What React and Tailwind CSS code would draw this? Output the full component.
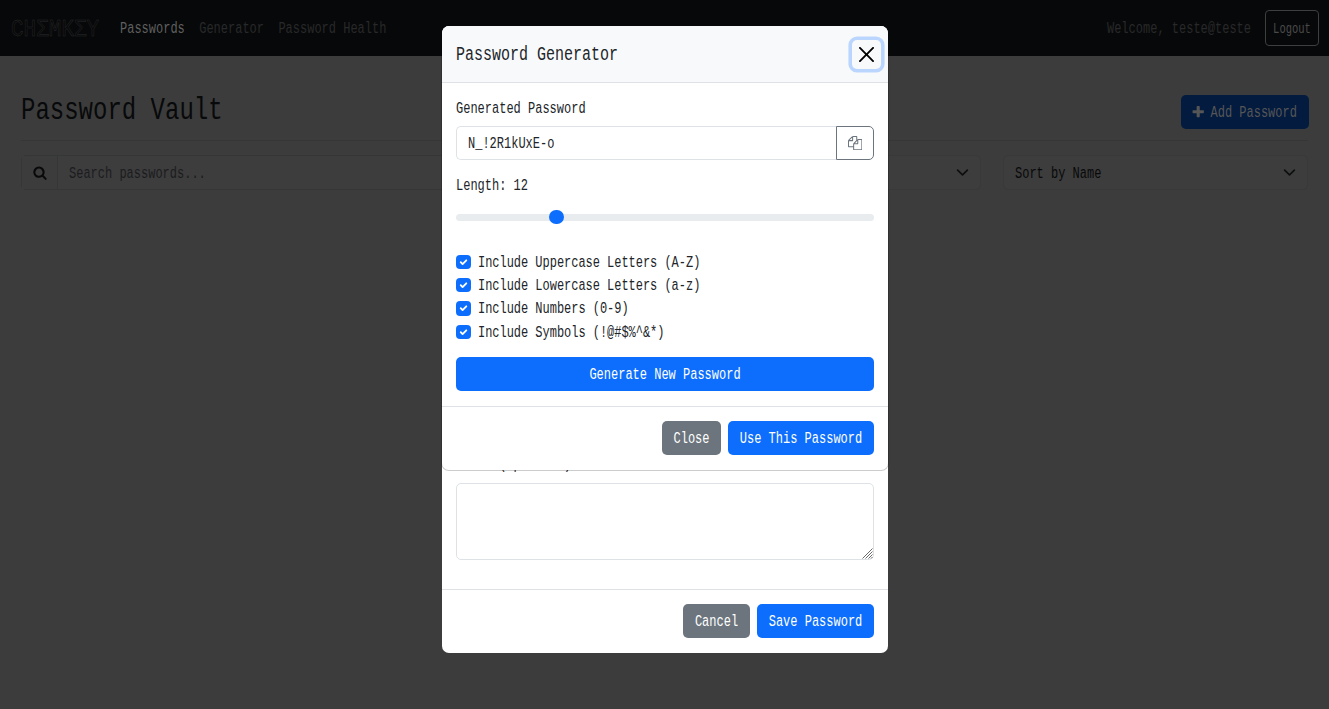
import React from "react";

// Condensed monospace text: tall glyphs without changing the line's width.
function T({ children, className = "" }) {
  return (
    <span className={`mt-[2px] inline-block scale-y-[1.34] whitespace-pre ${className}`}>
      {children}
    </span>
  );
}

function FaIcon({ d, className, viewBox = "0 0 1792 1792" }) {
  return (
    <svg viewBox={viewBox} className={className} fill="currentColor">
      <path d={d} />
    </svg>
  );
}

const SEARCH =
  "M1152 832q0-185-131.5-316.5T704 384 387.5 515.5 256 832t131.5 316.5T704 1280t316.5-131.5T1152 832zm512 832q0 52-38 90t-90 38q-54 0-90-38l-343-342q-179 124-399 124-143 0-273.5-55.5t-225-150-150-225T0 832t55.5-273.5 150-225 225-150T704 128t273.5 55.5 225 150 150 225T1408 832q0 220-124 399l343 343q37 37 37 90z";
const PLUS =
  "M1600 736v192q0 40-28 68t-68 28h-416v416q0 40-28 68t-68 28H800q-40 0-68-28t-28-68v-416H288q-40 0-68-28t-28-68V736q0-40 28-68t68-28h416V224q0-40 28-68t68-28h192q40 0 68 28t28 68v416h416q40 0 68 28t28 68z";
const COPY =
  "M1696 384q40 0 68 28t28 68v1216q0 40-28 68t-68 28h-960q-40 0-68-28t-28-68v-288h-544q-40 0-68-28t-28-68v-672q0-40 20-88t48-76l408-408q28-28 76-48t88-20h416q40 0 68 28t28 68v328q68-40 128-40h416zm-544 213l-299 299h299v-299zm-640-384l-299 299h299v-299zm196 647l316-316v-416h-384v416q0 40-28 68t-68 28h-416v640h512v-256q0-40 20-88t48-76zm956 804v-1152h-384v416q0 40-28 68t-68 28h-416v640h896z";
const CLOSE =
  "M.293.293a1 1 0 0 1 1.414 0L8 6.586 14.293.293a1 1 0 1 1 1.414 1.414L9.414 8l6.293 6.293a1 1 0 0 1-1.414 1.414L8 9.414l-6.293 6.293a1 1 0 0 1-1.414-1.414L6.586 8 .293 1.707a1 1 0 0 1 0-1.414";

function Select({ label }) {
  return (
    <div className="flex h-[35px] items-center justify-between rounded-[5px] border border-[#383939] bg-[#3d3d3d] pr-[11px] pl-[11px] text-[#08090a]">
      <T>{label}</T>
      <svg viewBox="0 0 16 16" className="h-[13px] w-[13px]" fill="none" stroke="#0d0e10" strokeWidth="2" strokeLinecap="round" strokeLinejoin="round">
        <path d="m2 5 6 6 6-6" />
      </svg>
    </div>
  );
}

function Button({ children, className }) {
  return (
    <button className={`flex h-[34px] items-center justify-center rounded-[5px] text-white ${className}`}>
      <T>{children}</T>
    </button>
  );
}

function Check({ label }) {
  return (
    <label className="flex h-[23.4px] items-center gap-[7px]">
      <span className="flex h-[14.4px] w-[15px] items-center justify-center rounded-[4px] bg-[#0d6efd]">
        <svg viewBox="0 0 20 20" className="h-[12.4px] w-[12.4px]" fill="none" stroke="#fff" strokeWidth="3" strokeLinecap="round" strokeLinejoin="round">
          <path d="m6 10 3 3 6-6" />
        </svg>
      </span>
      <T>{label}</T>
    </label>
  );
}

function Navbar() {
  return (
    <header className="flex h-14 items-center bg-[#070809] pr-[10px] pl-[11px]">
      <span className="w-[109px] pt-[2px] text-[21px] leading-none text-[#070809] [-webkit-text-stroke:0.4px_#2a2b2b]">
        <span className="inline-block scale-y-[1.12]">CHΣMKΣY</span>
      </span>
      <nav className="flex flex-1 gap-[14.4px] text-[#28292a]">
        <T className="text-[#5e5f5f]">Passwords</T>
        <T>Generator</T>
        <T>Password Health</T>
      </nav>
      <T className="mr-[14px] text-[#28292a]">Welcome, teste@teste</T>
      <button className="flex h-9 w-[54px] items-center justify-center rounded-[4px] border border-[#3e3e3f] text-[10.5px] text-[#4a4a4b]">
        <T className="mt-0 scale-y-[1.4]">Logout</T>
      </button>
    </header>
  );
}

function EntryModal() {
  return (
    <section className="absolute top-[26px] left-[442px] flex h-[627px] w-[446px] flex-col overflow-hidden rounded-[7px] bg-white">
      <div className="flex flex-1 flex-col justify-end px-[14px] pb-[29px]">
        <div className="mb-[8px] flex h-[22px] items-center">
          <T>Notes (optional)</T>
        </div>
        <div className="relative">
          <textarea className="block h-[77px] w-full resize-none rounded-[5px] border border-[#dee2e6] bg-white" />
          <svg viewBox="0 0 12 12" className="absolute right-px bottom-px h-3 w-3" fill="none" stroke="#6b6b6b" strokeWidth="1">
            <path d="M1.5 11.5l10-10M4.5 11.5l7-7M7.5 11.5l4-4M10 11.5l1.5-1.5" />
          </svg>
        </div>
      </div>
      <footer className="flex h-16 items-start justify-end gap-[7px] border-t border-[#dee2e6] px-[14px] pt-[14px]">
        <Button className="w-[67px] bg-[#6c757d]">Cancel</Button>
        <Button className="w-[117px] bg-[#0d6efd]">Save Password</Button>
      </footer>
    </section>
  );
}

function GeneratorModal() {
  return (
    <section className="absolute top-[26px] left-[441px] w-[448px]">
      <div className="flex h-[445px] flex-col overflow-hidden rounded-[8px] border border-t-0 border-black/20 bg-white bg-clip-padding">
        <header className="flex h-[57px] items-center justify-between border-b border-[#dee2e6] bg-[#f8f9fa] pr-[7px] pl-[14px]">
          <T className="mt-[3px] text-[15px]">Password Generator</T>
          <button className="flex h-[29px] w-[29px] items-center justify-center rounded-[5px] text-black ring-[3.6px] ring-[#bbd6fe]">
            <FaIcon viewBox="0 0 16 16" className="h-[15px] w-[15px]" d={CLOSE} />
          </button>
        </header>
        <div className="flex-1 px-[14px] pt-[14px]">
          <div className="flex h-[22px] items-center">
            <T>Generated Password</T>
          </div>
          <div className="mt-[7px] flex h-[34px]">
            <div className="flex flex-1 items-center rounded-l-[5px] border border-r-0 border-[#dee2e6] pl-[11px]">
              <T>N_!2R1kUxE-o</T>
            </div>
            <button className="flex w-[38px] items-center justify-center rounded-r-[5px] border border-[#6c757d] text-[#6c757d]">
              <FaIcon className="mr-[0.6px] h-[14.4px] w-[14.4px]" d={COPY} />
            </button>
          </div>
          <div className="mt-[14px] flex h-[22px] items-center">
            <T>Length: 12</T>
          </div>
          <div className="mt-[10px] flex h-[22px] items-center">
            <div className="flex h-[7px] w-full items-center rounded-full bg-[#e9ecef] pl-[93px]">
              <span className="h-[14.4px] w-[15px] shrink-0 rounded-full bg-[#0d6efd]" />
            </div>
          </div>
          <div className="mt-[22px] tracking-[-0.03px]">
            <Check label="Include Uppercase Letters (A-Z)" />
            <Check label="Include Lowercase Letters (a-z)" />
            <Check label="Include Numbers (0-9)" />
            <Check label="Include Symbols (!@#$%^&*)" />
          </div>
          <Button className="mt-[13px] w-full bg-[#0d6efd]">Generate New Password</Button>
        </div>
        <footer className="flex h-16 shrink-0 items-start justify-end gap-[7px] border-t border-[#dee2e6] px-[14px] pt-[14px]">
          <Button className="w-[59px] bg-[#6c757d]">Close</Button>
          <Button className="w-[146px] bg-[#0d6efd]">Use This Password</Button>
        </footer>
      </div>
    </section>
  );
}

export default function App() {
  return (
    <div className="relative h-[709px] w-[1329px] overflow-hidden bg-[#3c3c3c] font-['Liberation_Mono',monospace] text-[12px] leading-[22px] text-[#212529]">
      <Navbar />
      <main className="px-[21px] pt-[39px] text-[#08090a]">
        <div className="flex h-[46px] items-start justify-between border-b border-[#363637]">
          <h1 className="flex h-[30px] items-center text-[24px]">
            <T>Password Vault</T>
          </h1>
          <button className="-mr-px flex h-[34px] w-[128px] items-center justify-center gap-[5px] rounded-[5px] bg-[#031b3f] pr-[2px] text-[#565656]">
            <FaIcon className="h-[14.4px] w-[14.4px]" d={PLUS} />
            <T>Add Password</T>
          </button>
        </div>
        <div className="mt-[14px] grid grid-cols-[633px_305px_305px] gap-[22px]">
          <div className="flex h-[35px] rounded-[5px] border border-[#353636] bg-[#3d3d3d]">
            <div className="flex w-9 items-center justify-center border-r border-[#353636] bg-[#3c3c3c]">
              <FaIcon viewBox="0 64 1664 1792" className="mt-px h-[14.4px] w-[14px]" d={SEARCH} />
            </div>
            <div className="flex items-center pl-[11px] text-[#1b1c1d]">
              <T>Search passwords...</T>
            </div>
          </div>
          <Select label="All Categories" />
          <Select label="Sort by Name" />
        </div>
      </main>
      <EntryModal />
      <GeneratorModal />
    </div>
  );
}
